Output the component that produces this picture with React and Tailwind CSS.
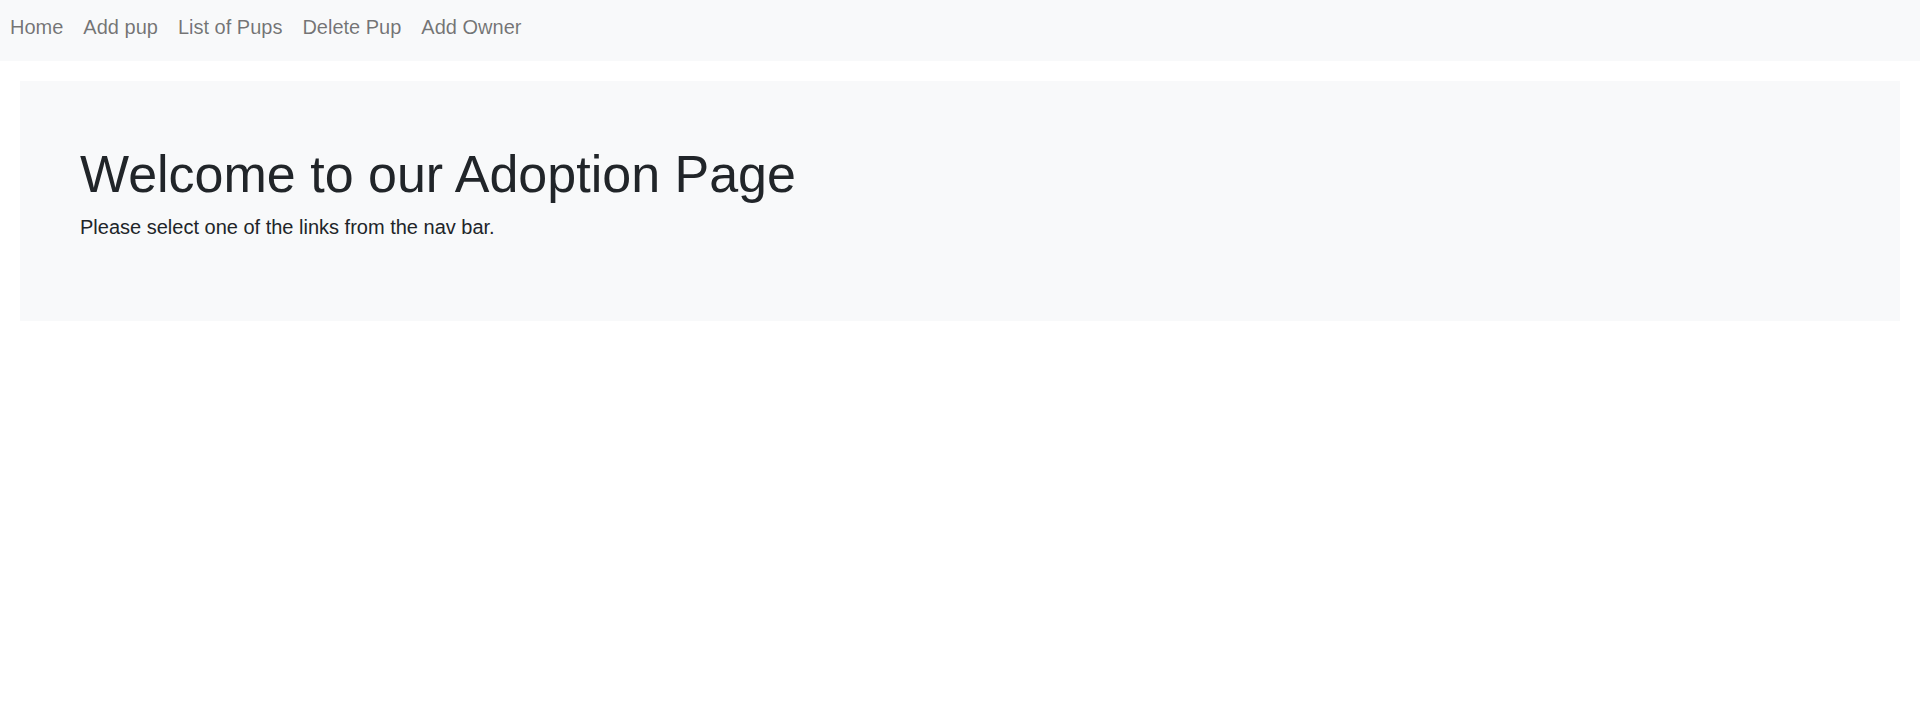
const links = ['Home', 'Add pup', 'List of Pups', 'Delete Pup', 'Add Owner'];

export default function App() {
  return (
    <div className="min-h-screen bg-white font-['Liberation_Sans',Arial,sans-serif] text-[#212529]">
      {/* Nav bar */}
      <nav className="h-[61px] bg-[#f8f9fa] pt-[12px]">
        <ul className="flex">
          {links.map((l) => (
            <li key={l}>
              <a href="#" className="block px-[10px] text-[20px] leading-[30px] text-[#0000008c] hover:text-[#000000b3]">
                {l}
              </a>
            </li>
          ))}
        </ul>
      </nav>

      {/* Jumbotron */}
      <div className="mx-[20px] mt-[20px] bg-[#f8f9fa] px-[60px] pt-[62px] pb-[79px]">
        <h1 className="mb-[7px] text-[52px] font-normal leading-[62px]">Welcome to our Adoption Page</h1>
        <p className="text-[20px] leading-[30px]">Please select one of the links from the nav bar.</p>
      </div>
    </div>
  );
}
